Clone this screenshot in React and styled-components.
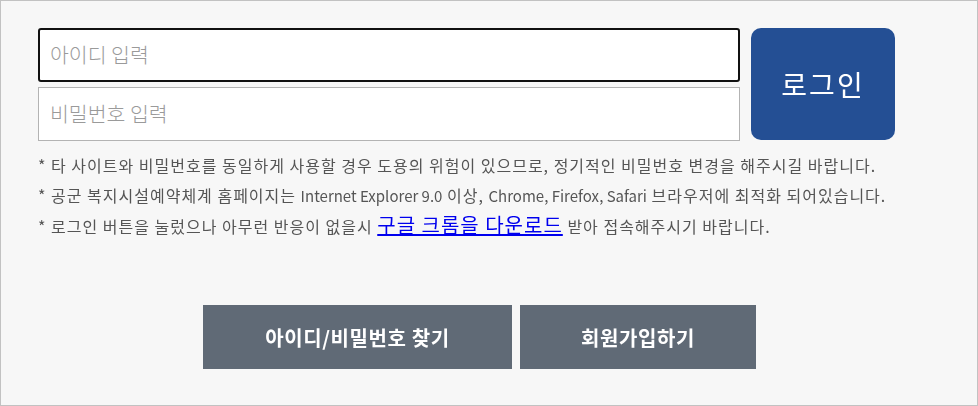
import React from "react";
import styled, { createGlobalStyle } from "styled-components";

const Global = createGlobalStyle`
  html, body {
    margin: 0;
    padding: 0;
    background: #f7f7f7;
  }
  * {
    box-sizing: border-box;
  }
`;

const Page = styled.div`
  width: 978px;
  height: 406px;
  border: 1px solid #c2c2c2;
  background: #f7f7f7;
  padding: 27px 0 0 37px;
  font-family: "Noto Sans CJK KR", "Noto Sans", sans-serif;
`;

const FormRow = styled.div`
  display: flex;
  gap: 11px;
  align-items: flex-start;
`;

const Fields = styled.div`
  display: flex;
  flex-direction: column;
  gap: 5px;
  width: 702px;
`;

const Field = styled.input`
  height: 54px;
  width: 100%;
  padding: 0 0 3px ${(p) => (p.$active ? "10px" : "11px")};
  border: ${(p) => (p.$active ? "2px solid #111" : "1px solid #b3b3b3")};
  border-radius: ${(p) => (p.$active ? "3px" : "0")};
  background: #fff;
  font-family: inherit;
  font-size: 20.5px;
  font-weight: 300;
  color: #333;
  outline: none;
  &::placeholder {
    color: #9a9a9a;
  }
`;

const LoginButton = styled.button`
  width: 144px;
  height: 112px;
  border: none;
  border-radius: 10px;
  background: #244f94;
  color: #fff;
  font-family: inherit;
  font-size: 28px;
  letter-spacing: 2px;
  cursor: pointer;
`;

const Notes = styled.ul`
  list-style: none;
  margin: 9px 0 0;
  padding: 0;
`;

const Note = styled.li`
  height: 30px;
  line-height: 30px;
  font-size: 16px;
  letter-spacing: 1px;
  color: #555;
  white-space: nowrap;
`;

const Latin = styled.span`
  font-size: 15px;
  letter-spacing: 0;
`;

const Link = styled.a`
  font-size: 20px;
  color: #0000ee;
  text-decoration: underline;
`;

const Actions = styled.div`
  display: flex;
  gap: 8px;
  margin: 65px 0 0 165px;
`;

const ActionButton = styled.button`
  width: ${(p) => p.$w}px;
  height: 64px;
  border: none;
  background: #606a76;
  color: #fff;
  font-family: inherit;
  font-size: 20px;
  letter-spacing: 0.6px;
  font-weight: 700;
  cursor: pointer;
`;

export default function App() {
  return (
    <>
      <Global />
      <Page>
        <FormRow>
          <Fields>
            <Field $active autoFocus placeholder="아이디 입력" />
            <Field type="password" placeholder="비밀번호 입력" />
          </Fields>
          <LoginButton>로그인</LoginButton>
        </FormRow>
        <Notes>
          <Note>
            * 타 사이트와 비밀번호를 동일하게 사용할 경우 도용의 위험이 있으므로, 정기적인 비밀번호 변경을 해주시길 바랍니다.
          </Note>
          <Note>
            * 공군 복지시설예약체계 홈페이지는 <Latin>Internet Explorer 9.0</Latin> 이상,{" "}
            <Latin>Chrome, Firefox, Safari</Latin> 브라우저에 최적화 되어있습니다.
          </Note>
          <Note>
            * 로그인 버튼을 눌렀으나 아무런 반응이 없을시 <Link href="#">구글 크롬을 다운로드</Link> 받아 접속해주시기 바랍니다.
          </Note>
        </Notes>
        <Actions>
          <ActionButton $w={309}>아이디/비밀번호 찾기</ActionButton>
          <ActionButton $w={236}>회원가입하기</ActionButton>
        </Actions>
      </Page>
    </>
  );
}
